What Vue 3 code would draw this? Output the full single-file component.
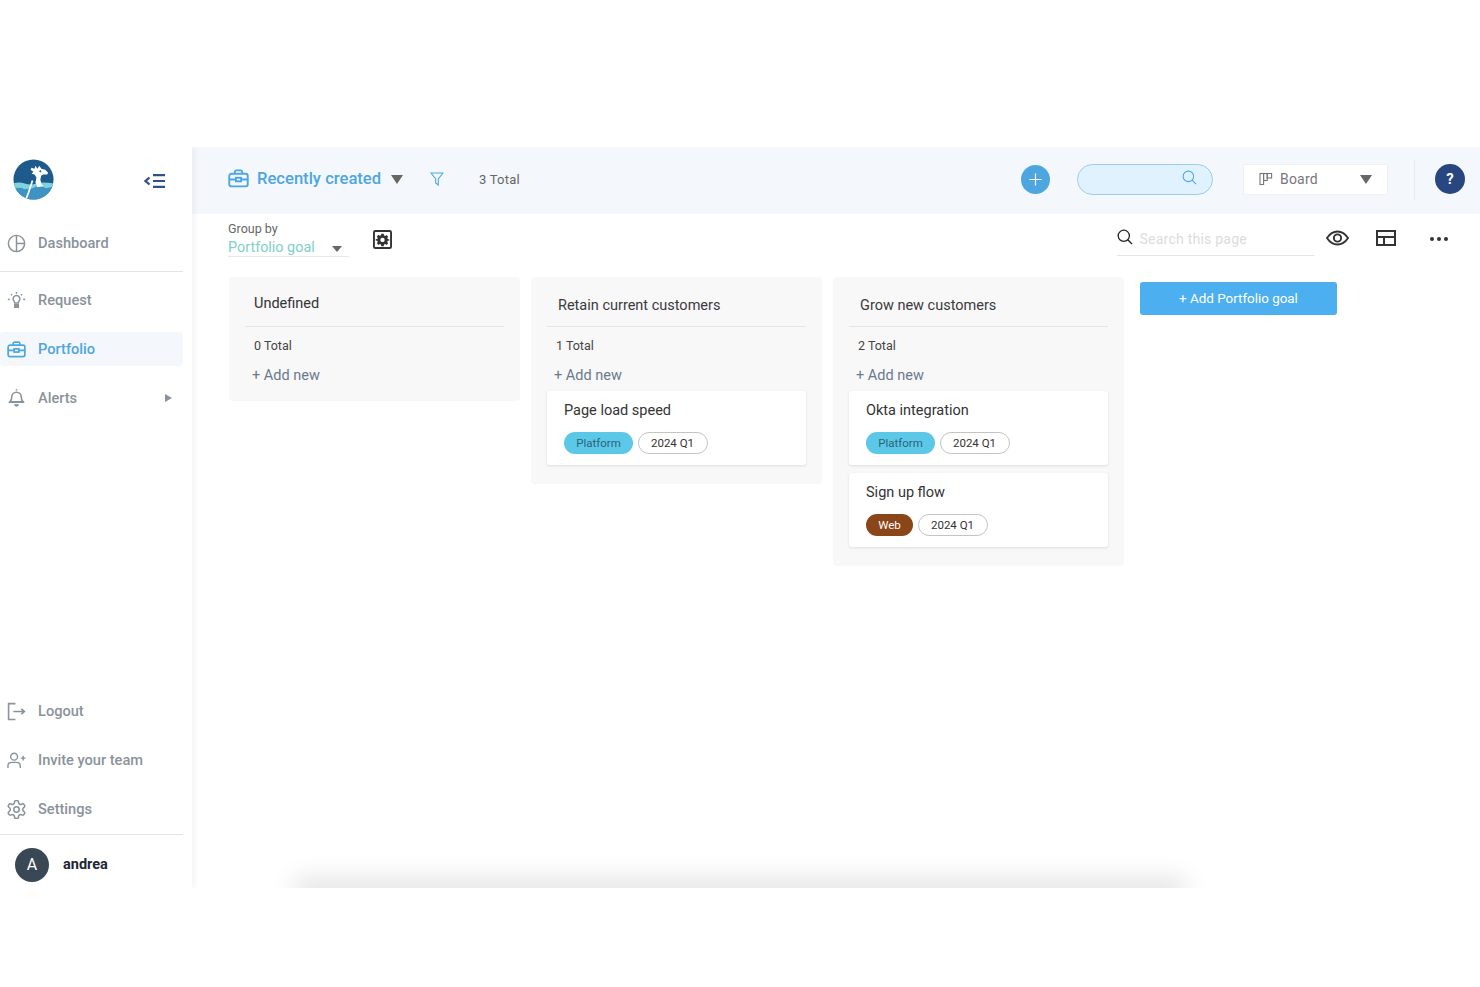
<template>
  <div class="page">
    <div class="app">
      <aside class="sidebar">
        <div class="brand">
          <svg class="logo" viewBox="0 0 42 42">
            <defs><clipPath id="lg"><circle cx="21" cy="21" r="20.500" /></clipPath></defs>
            <g clip-path="url(#lg)">
              <rect width="42" height="42" fill="#1f5a8c" />
              <path d="M0 25 Q6 23 12 25 T24 25 T42 25 V42 H0Z" fill="#7fd3de" />
              <path d="M0 31 Q6 28 12 31 L20 30 L27 27 L34 30 L42 28 V42 H0Z" fill="#3e93c4" />
              <path d="M19 9 l3 1 1-3 2 3 2-3 2 3 4 1 3 3 -1 2 -4 0 -2 1 -1 4 1 4 2 3 -6 1 -2-5 1-5 -2-3 -3-1 2-2 -3-2z" fill="#fff" />
              <circle cx="28" cy="12.500" r="1" fill="#1f5a8c" />
              <path d="M20 22 L16 34 L13 42" fill="none" stroke="#fff" stroke-width="1.800" />
            </g>
          </svg>
          <svg class="collapse" viewBox="0 0 22 14" fill="none" stroke="#2f4f8f">
            <path d="M6.500 3.500 L2.500 7 L6.500 10.500" stroke-width="2.300" />
            <path d="M10 1.200H22M10 7H22M10 12.800H22" stroke-width="2.200" />
          </svg>
        </div>

        <nav class="nav">
          <a class="nav-item">
            <svg viewBox="0 0 18 18" fill="none" stroke="currentColor" stroke-width="1.400"><circle cx="9" cy="9" r="7.700" /><path d="M9 1.300V16.700M9 9H16.700" /></svg>
            <span>Dashboard</span>
          </a>
          <div class="nav-line"></div>
          <a class="nav-item">
            <svg viewBox="0 0 18 18" fill="none" stroke="currentColor" stroke-width="1.400"><path d="M6 8.500a3.200 3.200 0 1 1 6 0c-.4.9-1.200 1.400-1.300 2.800H7.300C7.200 9.900 6.400 9.400 6 8.500z" /><path d="M7.300 13H10.700V15.500H7.300Z" fill="currentColor" /><path d="M9 1v1.600M3.800 3l1 1.100M14.200 3l-1 1.100M.8 8h1.800M15.400 8h1.800" /></svg>
            <span>Request</span>
          </a>
          <a class="nav-item active">
            <svg viewBox="0 0 20 18" fill="none" stroke="currentColor" stroke-width="1.800"><rect x="1.200" y="4.500" width="17.600" height="12" rx="2" /><path d="M6.500 4.500V2.800a1.500 1.500 0 0 1 1.500-1.500h4a1.500 1.500 0 0 1 1.500 1.500V4.500M1.200 10H7.500M12.500 10H18.800" /><rect x="7.500" y="8.300" width="5" height="3.400" /></svg>
            <span>Portfolio</span>
          </a>
          <a class="nav-item">
            <svg viewBox="0 0 18 18" fill="none" stroke="currentColor" stroke-width="1.500"><path d="M3 12c1-1 1.500-2 1.500-4.500a4.500 4.500 0 0 1 9 0c0 2.500.5 3.500 1.500 4.500z" /><path d="M1.800 12.500H16.200" /><path d="M7.500 14.500a1.500 1.500 0 0 0 3 0" fill="currentColor" /><path d="M9 1.500V.2" /></svg>
            <span>Alerts</span>
            <i class="nav-arrow"></i>
          </a>
        </nav>

        <div class="nav nav-bottom">
          <a class="nav-item">
            <svg viewBox="0 0 18 18" fill="none" stroke="currentColor" stroke-width="1.500"><path d="M8 1.500H1.500V16.500H8" /><path d="M6 9H16.500M13.500 6.500L16.500 9L13.500 11.500" /></svg>
            <span>Logout</span>
          </a>
          <a class="nav-item">
            <svg viewBox="0 0 20 18" fill="none" stroke="currentColor" stroke-width="1.500"><circle cx="7.500" cy="5" r="3.600" /><path d="M1 17v-2.500c0-2 1.800-3.500 4-3.500h5c2.200 0 4 1.500 4 3.500V17" /><path d="M14.500 6.500h5M17 4v5" /></svg>
            <span>Invite your team</span>
          </a>
          <a class="nav-item">
            <svg viewBox="1.500 1.500 21 21" fill="none" stroke="currentColor" stroke-width="1.700"><path d="M12.220 2h-.44a2 2 0 0 0-2 2v.18a2 2 0 0 1-1 1.730l-.43.250a2 2 0 0 1-2 0l-.15-.08a2 2 0 0 0-2.730.730l-.22.380a2 2 0 0 0 .73 2.730l.15.100a2 2 0 0 1 1 1.720v.510a2 2 0 0 1-1 1.740l-.15.090a2 2 0 0 0-.73 2.730l.22.380a2 2 0 0 0 2.730.730l.15-.08a2 2 0 0 1 2 0l.43.250a2 2 0 0 1 1 1.730V20a2 2 0 0 0 2 2h.44a2 2 0 0 0 2-2v-.18a2 2 0 0 1 1-1.730l.43-.250a2 2 0 0 1 2 0l.15.080a2 2 0 0 0 2.730-.73l.22-.39a2 2 0 0 0-.73-2.730l-.15-.08a2 2 0 0 1-1-1.740v-.5a2 2 0 0 1 1-1.740l.15-.09a2 2 0 0 0 .73-2.730l-.22-.38a2 2 0 0 0-2.730-.73l-.15.080a2 2 0 0 1-2 0l-.43-.25a2 2 0 0 1-1-1.730V4a2 2 0 0 0-2-2z" /><circle cx="12" cy="12" r="3" /></svg>
            <span>Settings</span>
          </a>
          <div class="nav-line last"></div>
          <div class="user">
            <div class="avatar">A</div>
            <span>andrea</span>
          </div>
        </div>
      </aside>

      <main class="main">
        <header class="topbar">
          <svg class="top-case" viewBox="0 0 20 18" fill="none" stroke="#4da6e0" stroke-width="1.800"><rect x="1.200" y="4.500" width="17.600" height="12" rx="2" /><path d="M6.500 4.500V2.800a1.500 1.500 0 0 1 1.500-1.500h4a1.500 1.500 0 0 1 1.500 1.500V4.500M1.200 10H7.500M12.500 10H18.800" /><rect x="7.500" y="8.300" width="5" height="3.400" /></svg>
          <span class="view-title">Recently created</span>
          <i class="tri big"></i>
          <svg class="filter" viewBox="0 0 14 14" fill="none" stroke="#4da6e0" stroke-width="1.100"><path d="M1 1H13L8.300 7V13L5.700 11V7Z" /></svg>
          <span class="total">3 Total</span>
          <div class="spacer"></div>
          <button class="plus">
            <svg viewBox="0 0 16 16" stroke="#fff" stroke-width="1.300"><path d="M8 1.500V14.500M1.500 8H14.500" /></svg>
          </button>
          <div class="pill-search">
            <svg viewBox="0 0 16 16" fill="none" stroke="#4da6e0" stroke-width="1.100"><circle cx="6.800" cy="6.800" r="5.600" /><path d="M10.800 10.800L15 15" /></svg>
          </div>
          <div class="view-select">
            <svg viewBox="0 0 14 14" fill="none" stroke="#777" stroke-width="1.100"><rect x="1" y="1.500" width="3.600" height="11" /><rect x="4.600" y="1.500" width="3.600" height="7" /><rect x="8.200" y="1.500" width="4.400" height="4.500" /></svg>
            <span>Board</span>
            <i class="tri big"></i>
          </div>
          <div class="top-line"></div>
          <div class="help">?</div>
        </header>

        <div class="toolbar">
          <div class="group-by">
            <label>Group by</label>
            <div class="group-val"><span>Portfolio goal</span><i class="tri small"></i></div>
          </div>
          <div class="gear-box">
            <svg viewBox="0 0 20 20"><rect x="1" y="1" width="18" height="18" rx="1.500" fill="none" stroke="#333" stroke-width="2" /><path fill="#333" d="M8.700 4h2.600l.3 1.700 1.200.5 1.400-1 1.800 1.800-1 1.400.5 1.200 1.700.3v1.200l-1.700.3-.5 1.200 1 1.400-1.800 1.800-1.400-1-1.200.5-.3 1.700H8.700l-.3-1.700-1.200-.5-1.400 1-1.800-1.800 1-1.400-.5-1.200L2.800 11V9.800l1.700-.3.5-1.200-1-1.400 1.800-1.800 1.400 1 1.200-.5z" /><circle cx="10" cy="10.400" r="2.300" fill="#fff" /></svg>
          </div>
          <div class="spacer"></div>
          <div class="page-search">
            <svg viewBox="0 0 16 16" fill="none" stroke="#222" stroke-width="1.300"><circle cx="6.800" cy="6.800" r="5.600" /><path d="M10.800 10.800L15 15" /></svg>
            <span>Search this page</span>
          </div>
          <svg class="eye" viewBox="0 0 24 16" fill="none" stroke="#333" stroke-width="2"><path d="M1 8C4 3.500 7.500 1.200 12 1.200S20 3.500 23 8C20 12.500 16.500 14.800 12 14.800S4 12.500 1 8Z" /><circle cx="12" cy="8" r="3.800" /></svg>
          <svg class="layout" viewBox="0 0 20 16" fill="none" stroke="#333" stroke-width="2"><rect x="1" y="1" width="18" height="14" /><path d="M1 7H19M8 7V15" /></svg>
          <div class="dots"><b></b><b></b><b></b></div>
        </div>

        <div class="board">
          <section v-for="col in columns" :key="col.title" class="column">
            <h3 :class="{ first: col.items.length === 0 }">{{ col.title }}</h3>
            <div class="col-total">{{ col.items.length }} Total</div>
            <div class="add-new">+ Add new</div>
            <article v-for="item in col.items" :key="item.name" class="card">
              <div class="card-name">{{ item.name }}</div>
              <div class="tags">
                <span class="tag" :class="item.tagClass">{{ item.tag }}</span>
                <span class="tag quarter">2024 Q1</span>
              </div>
            </article>
          </section>
          <button class="add-goal">+ Add Portfolio goal</button>
        </div>
      </main>
      <div class="bottom-shadow"></div>
    </div>
  </div>
</template>

<script setup>
const columns = [
  { title: "Undefined", items: [] },
  {
    title: "Retain current customers",
    items: [{ name: "Page load speed", tag: "Platform", tagClass: "platform" }],
  },
  {
    title: "Grow new customers",
    items: [
      { name: "Okta integration", tag: "Platform", tagClass: "platform" },
      { name: "Sign up flow", tag: "Web", tagClass: "web" },
    ],
  },
]
</script>

<style scoped>
.page {
  padding-top: 147px;
  height: 840px;
  background: #fff;
  font-family: Roboto, "Liberation Sans", sans-serif;
}
.app {
  position: relative;
  display: flex;
  height: 741px;
  overflow: hidden;
}

/* sidebar */
.sidebar {
  position: relative;
  z-index: 1;
  display: flex;
  flex-direction: column;
  flex: none;
  width: 192px;
  background: #fff;
  box-shadow: 2px 0 7px rgba(0, 0, 0, .06);
}
.brand {
  display: flex;
  justify-content: space-between;
  align-items: center;
  height: 66px;
  padding: 0 27px 0 13px;
}
.logo {
  width: 41px;
  height: 41px;
  margin-top: -2px;
}
.collapse {
  width: 22px;
  height: 14px;
  margin-top: 2px;
}
.nav {
  display: flex;
  flex-direction: column;
  padding-top: 13px;
}
.nav-bottom {
  margin-top: auto;
  padding-top: 0;
}
.nav-item {
  display: flex;
  align-items: center;
  width: 183px;
  height: 34px;
  margin-bottom: 15px;
  padding-left: 7px;
  box-sizing: border-box;
  color: #8a929b;
  font-size: 14.600px;
  font-weight: 500;
  border-radius: 3px;
}
.nav-item svg {
  flex: none;
  width: 19px;
  height: 19px;
  margin-right: 12px;
}
.nav-item.active {
  background: #f4f8fd;
  color: #4da6e0;
}
.nav-arrow {
  margin-left: auto;
  margin-right: 11px;
  border-left: 7px solid #8a929b;
  border-top: 4.500px solid transparent;
  border-bottom: 4.500px solid transparent;
}
.nav-line {
  width: 183px;
  height: 1px;
  background: #e2e4e7;
  margin: -4px 0 11px;
}
.nav-line.last {
  margin: -7px 0 0;
}
.user {
  display: flex;
  align-items: center;
  height: 53px;
  padding: 6px 0 0 15px;
  box-sizing: border-box;
  color: #1d2733;
  font-size: 14.500px;
  font-weight: 700;
}
.avatar {
  display: flex;
  justify-content: center;
  align-items: center;
  width: 34px;
  height: 34px;
  margin-right: 14px;
  border-radius: 50%;
  background: #3a4754;
  color: #fff;
  font-size: 16px;
  font-weight: 400;
}

/* header */
.main {
  flex: 1;
  min-width: 0;
}
.topbar {
  display: flex;
  align-items: center;
  height: 67px;
  padding: 0 15px 3px 36px;
  box-sizing: border-box;
  background: #f4f8fd;
}
.top-case {
  width: 21px;
  height: 19px;
  margin: 0 8px 2px 0;
}
.view-title {
  margin-bottom: 2px;
  color: #4da6e0;
  font-size: 16.600px;
  font-weight: 500;
}
.tri {
  display: inline-block;
  width: 0;
  height: 0;
  border-left: 6.500px solid transparent;
  border-right: 6.500px solid transparent;
  border-top: 9px solid #666;
}
.topbar > .tri {
  margin-left: 10px;
}
.filter {
  width: 14px;
  height: 14px;
  margin-left: 27px;
}
.total {
  margin-left: 35px;
  color: #666;
  font-size: 13px;
  letter-spacing: .2px;
  padding-top: 1px;
}
.spacer {
  flex: 1;
}
.plus {
  display: flex;
  justify-content: center;
  align-items: center;
  width: 29px;
  height: 29px;
  padding: 0;
  border: 0;
  border-radius: 50%;
  background: #4da6e0;
}
.plus svg {
  width: 15px;
  height: 15px;
}
.pill-search {
  display: flex;
  justify-content: flex-end;
  align-items: center;
  width: 136px;
  height: 31px;
  margin-left: 27px;
  padding: 0 15px 3px 0;
  box-sizing: border-box;
  background: #e0f2fe;
  border: 1px solid #9ccdee;
  border-radius: 16px;
}
.pill-search svg {
  width: 15px;
  height: 15px;
}
.view-select {
  display: flex;
  align-items: center;
  width: 145px;
  height: 31px;
  margin-left: 30px;
  padding: 0 15px;
  box-sizing: border-box;
  background: #fff;
  border: 1px solid #eef1f5;
  color: #777;
  font-size: 14px;
  letter-spacing: .2px;
}
.view-select svg {
  width: 14px;
  height: 14px;
  margin-right: 7px;
}
.view-select span {
  margin-bottom: 1px;
}
.view-select .tri {
  margin-left: auto;
}
.top-line {
  width: 1px;
  height: 41px;
  margin-left: 26px;
  background: #e8ebf0;
}
.help {
  display: flex;
  justify-content: center;
  align-items: center;
  width: 30px;
  height: 30px;
  margin-left: 20px;
  border-radius: 50%;
  background: #28467f;
  color: #fff;
  font-size: 15px;
  font-weight: 700;
}

/* toolbar */
.toolbar {
  display: flex;
  align-items: center;
  height: 63px;
  padding: 0 32px 12px 36px;
  box-sizing: border-box;
}
.group-by {
  width: 121px;
  border-bottom: 1px solid #e8e8e8;
}
.group-by label {
  display: block;
  margin-bottom: 1px;
  color: #666;
  font-size: 12.500px;
  line-height: 14px;
}
.group-val {
  display: flex;
  justify-content: space-between;
  align-items: center;
  height: 18px;
  padding: 1px 7px 0 0;
  color: #7fd0c9;
  font-size: 14.400px;
}
.tri.small {
  border-left-width: 5px;
  border-right-width: 5px;
  border-top-width: 6px;
  margin-top: 3px;
}
.gear-box {
  width: 19px;
  height: 19px;
  margin: 0 0 0 24px;
}
.gear-box svg {
  display: block;
  width: 100%;
  height: 100%;
}
.page-search {
  display: flex;
  align-items: center;
  width: 197px;
  height: 33px;
  margin-top: -1px;
  border-bottom: 1px solid #e5e5e5;
  color: #dcdcdc;
  font-size: 14.100px;
  letter-spacing: .2px;
}
.page-search svg {
  width: 16px;
  height: 16px;
  margin: -3px 7px 0 0;
}
.eye {
  width: 23px;
  height: 16px;
  margin: -4px 0 0 12px;
}
.layout {
  width: 20px;
  height: 16px;
  margin: -4px 0 0 27px;
}
.dots {
  display: flex;
  gap: 2.500px;
  margin: -2px 0 0 34px;
  padding-top: 1px;
}
.dots b {
  width: 4.500px;
  height: 4.500px;
  border-radius: 50%;
  background: #333;
}

/* board */
.board {
  display: flex;
  align-items: flex-start;
  gap: 11px;
  padding-left: 37px;
}
.column {
  width: 291px;
  padding: 0 16px 19px;
  box-sizing: border-box;
  background: #f8f8f9;
  border-radius: 4px;
}
.column h3 {
  height: 50px;
  margin: 0;
  padding: 20px 0 0 11px;
  box-sizing: border-box;
  border-bottom: 1px solid #e3e5e8;
  color: #3b3b3b;
  font-size: 14.500px;
  font-weight: 400;
  line-height: 18px;
}
.column h3.first {
  padding: 18px 0 0 9px;
  color: #333;
}
.col-total {
  margin-top: 11px;
  padding-left: 9px;
  color: #444;
  font-size: 12.500px;
  line-height: 15px;
}
.add-new {
  margin-top: 14px;
  padding-left: 7px;
  height: 24px;
  color: #6a7a8c;
  font-size: 14.500px;
  line-height: 18px;
}
.column:first-child {
  padding-bottom: 10px;
}
.card {
  height: 74px;
  margin-bottom: 8px;
  padding: 11px 17px 0;
  box-sizing: border-box;
  background: #fff;
  border-radius: 3px;
  box-shadow: 0 1px 3px rgba(0, 0, 0, .11);
}
.card:last-child {
  margin-bottom: 0;
}
.card-name {
  color: #333;
  font-size: 14.500px;
  line-height: 18px;
}
.tags {
  display: flex;
  gap: 5px;
  margin-top: 12px;
}
.tag {
  display: flex;
  justify-content: center;
  align-items: center;
  height: 22px;
  box-sizing: border-box;
  border-radius: 11px;
  font-size: 11.500px;
}
.tag.platform {
  width: 69px;
  background: #5bc8e8;
  color: #2b6478;
}
.tag.web {
  width: 47px;
  background: #8a4518;
  color: #fff;
}
.tag.quarter {
  width: 70px;
  padding-right: 1px;
  background: #fff;
  border: 1px solid #c4c4c4;
  color: #333;
}
.add-goal {
  flex: none;
  width: 197px;
  height: 33px;
  margin: 5px 0 0 5px;
  padding: 0;
  border: 0;
  border-radius: 3px;
  background: #4cafef;
  color: #fff;
  font-family: inherit;
  font-size: 13.400px;
}

/* fading shadow along the bottom edge */
.bottom-shadow {
  position: absolute;
  left: 305px;
  right: 305px;
  bottom: -10px;
  height: 10px;
  box-shadow: 0 0 26px 10px rgba(0, 0, 0, .11);
}
</style>

<style>
body {
  margin: 0;
  background: #fff;
}
</style>
